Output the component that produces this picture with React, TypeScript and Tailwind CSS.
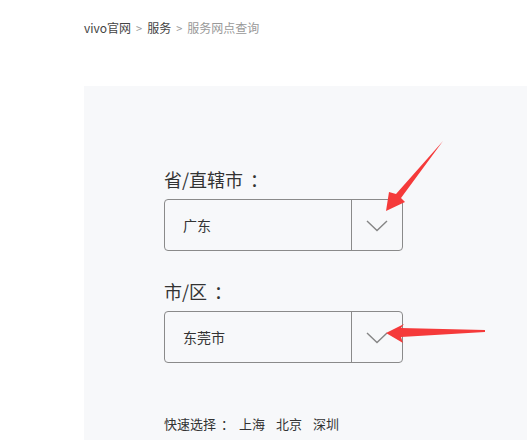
const font = { fontFamily: '"Noto Sans CJK SC", "Liberation Sans", sans-serif' }

const Chevron = () => (
  <svg width="22" height="12" viewBox="0 0 22 12" fill="none">
    <polyline points="1,1 11,10.5 21,1" stroke="#858585" strokeWidth="1.4" />
  </svg>
)

const Select = ({ value }: { value: string }) => (
  <div className="flex h-[52px] w-[239px] rounded-[4px] border border-[#8a8a8a]">
    <div className="flex flex-1 items-center pl-[18px] text-[14px] text-[#333]">{value}</div>
    <div className="flex w-[51px] items-center justify-center border-l border-[#8a8a8a] pt-[1px]">
      <Chevron />
    </div>
  </div>
)

const Label = ({ text }: { text: string }) => (
  <div className="flex text-[18px] leading-[26px] text-[#333]">
    <span>{text}</span>
    <span className="ml-[7px]">：</span>
  </div>
)

export default function App() {
  return (
    <div className="relative h-[440px] w-[527px] overflow-hidden bg-white" style={font}>
      <div className="flex items-center pl-[84px] pt-[18px] text-[12px] leading-[20px]">
        <span className="text-[#444]">vivo官网</span>
        <span className="px-[5px] text-[11px] text-[#999]">&gt;</span>
        <span className="text-[#444]">服务</span>
        <span className="px-[5px] text-[11px] text-[#999]">&gt;</span>
        <span className="text-[#999]">服务网点查询</span>
      </div>

      <div className="ml-[84px] mt-[48px] h-[400px] bg-[#f7f8fa] pl-[80px] pt-[80px]">
        <Label text="省/直辖市" />
        <div className="mt-[7px]">
          <Select value="广东" />
        </div>

        <div className="mt-[27px]">
          <Label text="市/区" />
        </div>
        <div className="mt-[7px]">
          <Select value="东莞市" />
        </div>

        <div className="mt-[51px] flex text-[13px] leading-[20px] text-[#333]">
          <span>快速选择</span>
          <span className="ml-[5px]">：</span>
          <span className="ml-[5px]">上海</span>
          <span className="ml-[11px]">北京</span>
          <span className="ml-[11px]">深圳</span>
        </div>
      </div>

      {/* red annotation arrows */}
      <svg className="pointer-events-none absolute left-0 top-0" width="527" height="440">
        <polygon
          points="443,141 401,198 405,202 386,211 389,192 396,194"
          fill="#f53a3a"
        />
        <polygon
          points="485,330 485,332 401,337 403,343 386,333 404,324 401,328"
          fill="#f53a3a"
        />
      </svg>
    </div>
  )
}
